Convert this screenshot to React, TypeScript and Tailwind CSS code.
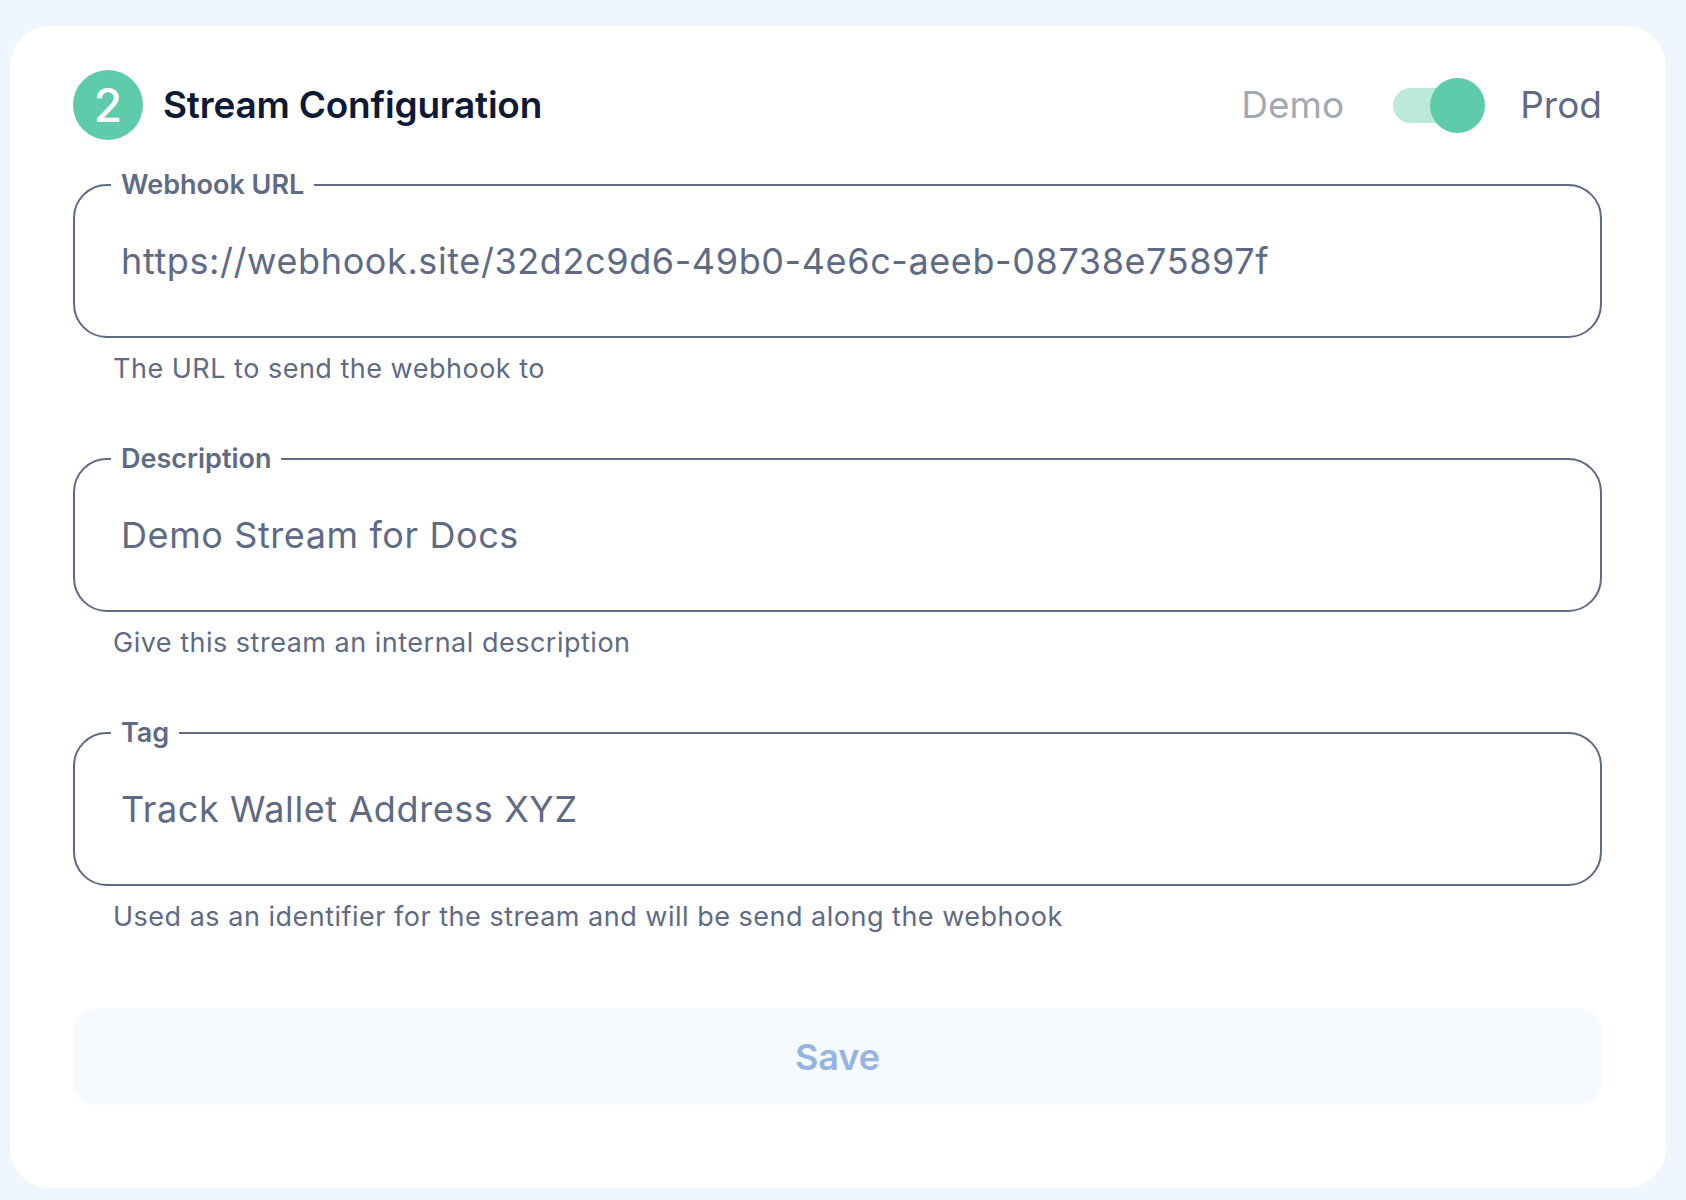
import { useState } from 'react';

type FieldProps = {
  label: string;
  value: string;
  helper: string;
};

function OutlinedField({ label, value, helper }: FieldProps) {
  const [text, setText] = useState(value);

  return (
    <div>
      <fieldset className="border-2 border-[#5f6a84] rounded-[34px] px-0 m-0 min-w-0">
        <legend className="ml-[36px] px-[10px] text-[27px] leading-[30px] font-semibold text-[#5f6a84]">
          {label}
        </legend>
        <div className="h-[136px] flex items-center pb-[14px] pl-[46px] pr-[46px]">
          <input
            value={text}
            onChange={(e) => setText(e.target.value)}
            className="w-full bg-transparent outline-none text-[36px] leading-[44px] tracking-[0.6px] text-[#5f6a84]"
          />
        </div>
      </fieldset>
      <p className="mt-[14px] ml-[40px] text-[27px] leading-[34px] tracking-[0.5px] text-[#5f6a84]">{helper}</p>
    </div>
  );
}

export default function App() {
  const [prod, setProd] = useState(true);

  return (
    <div className="min-h-screen bg-[#eff6fd] pt-[26px] pl-[10px] pr-[20px] pb-[12px] font-['Inter',sans-serif]">
      <div className="bg-white rounded-[40px] pt-[44px] pl-[63px] pr-[64px] pb-[83px]">
        <div className="flex items-center justify-between h-[70px]">
          <div className="flex items-center">
            <div className="w-[70px] h-[70px] rounded-full bg-[#5ecbaa] flex items-center justify-center text-white text-[46px] font-medium leading-none">
              2
            </div>
            <h2 className="ml-[20px] text-[37px] font-semibold text-[#0e1a35] tracking-[-0.2px]">
              Stream Configuration
            </h2>
          </div>

          <div className="flex items-center">
            <span className={'text-[37px] ' + (prod ? 'text-[#a3a8b2]' : 'text-[#5f6a84]')}>Demo</span>
            <button
              onClick={() => setProd(!prod)}
              className="relative ml-[49px] w-[92px] h-[55px] flex items-center"
            >
              <span className="block w-[88px] h-[35px] rounded-full bg-[#bde9da]" />
              <span
                className={
                  'absolute top-0 w-[55px] h-[55px] rounded-full bg-[#5ecbaa] transition-all ' +
                  (prod ? 'left-[37px]' : 'left-0')
                }
              />
            </button>
            <span className={'ml-[35px] text-[37px] ' + (prod ? 'text-[#5f6a84]' : 'text-[#a3a8b2]')}>Prod</span>
          </div>
        </div>

        <div className="mt-[30px] flex flex-col gap-[58px]">
          <OutlinedField
            label="Webhook URL"
            value="https://webhook.site/32d2c9d6-49b0-4e6c-aeeb-08738e75897f"
            helper="The URL to send the webhook to"
          />
          <OutlinedField
            label="Description"
            value="Demo Stream for Docs"
            helper="Give this stream an internal description"
          />
          <OutlinedField
            label="Tag"
            value="Track Wallet Address XYZ"
            helper="Used as an identifier for the stream and will be send along the webhook"
          />
        </div>

        <button className="mt-[74px] w-full h-[97px] rounded-[24px] bg-[#f6faff] text-[#95b4e0] text-[36px] font-semibold">
          Save
        </button>
      </div>
    </div>
  );
}
